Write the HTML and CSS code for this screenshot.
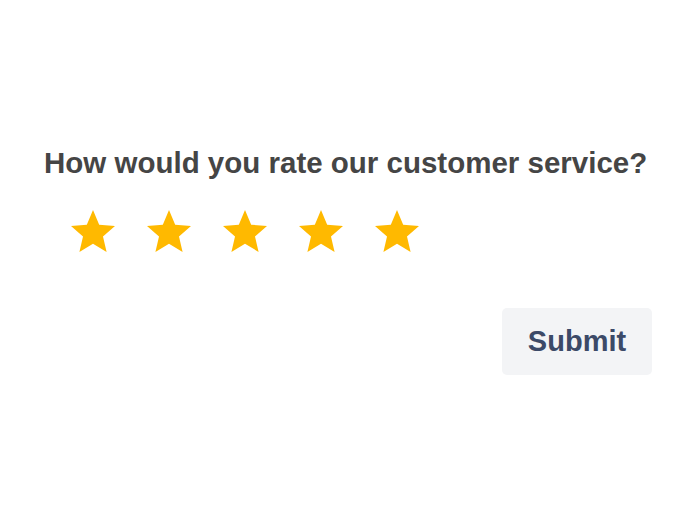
FILE: index.html
```html
<!DOCTYPE html>
<html lang="en">
<head>
<meta charset="UTF-8">
<title>Rate our service</title>
<link rel="stylesheet" href="styles.css">
</head>
<body>
    <form class="rating-form">
        <p class="question">How would you rate our customer service?</p>

        <div class="stars">
            <span class="star"><svg viewBox="2 2 20 19"><path d="M12 17.27L18.18 21l-1.64-7.03L22 9.24l-7.19-.61L12 2 9.19 8.63 2 9.24l5.46 4.73L5.82 21z"/></svg></span>
            <span class="star"><svg viewBox="2 2 20 19"><path d="M12 17.27L18.18 21l-1.64-7.03L22 9.24l-7.19-.61L12 2 9.19 8.63 2 9.24l5.46 4.73L5.82 21z"/></svg></span>
            <span class="star"><svg viewBox="2 2 20 19"><path d="M12 17.27L18.18 21l-1.64-7.03L22 9.24l-7.19-.61L12 2 9.19 8.63 2 9.24l5.46 4.73L5.82 21z"/></svg></span>
            <span class="star"><svg viewBox="2 2 20 19"><path d="M12 17.27L18.18 21l-1.64-7.03L22 9.24l-7.19-.61L12 2 9.19 8.63 2 9.24l5.46 4.73L5.82 21z"/></svg></span>
            <span class="star"><svg viewBox="2 2 20 19"><path d="M12 17.27L18.18 21l-1.64-7.03L22 9.24l-7.19-.61L12 2 9.19 8.63 2 9.24l5.46 4.73L5.82 21z"/></svg></span>
        </div>

        <div class="actions">
            <button type="button" class="submit">Submit</button>
        </div>
    </form>
</body>
</html>
```

FILE: styles.css
```css
body {
    font-family: "Liberation Sans", Arial, sans-serif;
    margin: 0;
    background-color: white;
}
.rating-form {
    width: 608px;
    padding: 145px 0 0 44px;
}
.question {
    margin: 0;
    font-size: 29.5px;
    font-weight: bold;
    color: #454545;
    line-height: 36px;
}
.stars {
    display: flex;
    gap: 32px;
    padding: 29px 0 0 27px;
}
.star svg {
    display: block;
    width: 44px;
    height: 42px;
    fill: #ffb900;
}
.actions {
    display: flex;
    justify-content: flex-end;
    padding-top: 56px;
}
.submit {
    width: 150px;
    height: 67px;
    background-color: #f3f4f6;
    color: #3c4a68;
    font-family: inherit;
    font-size: 29px;
    font-weight: bold;
    border: none;
    border-radius: 5px;
    cursor: pointer;
}
```
